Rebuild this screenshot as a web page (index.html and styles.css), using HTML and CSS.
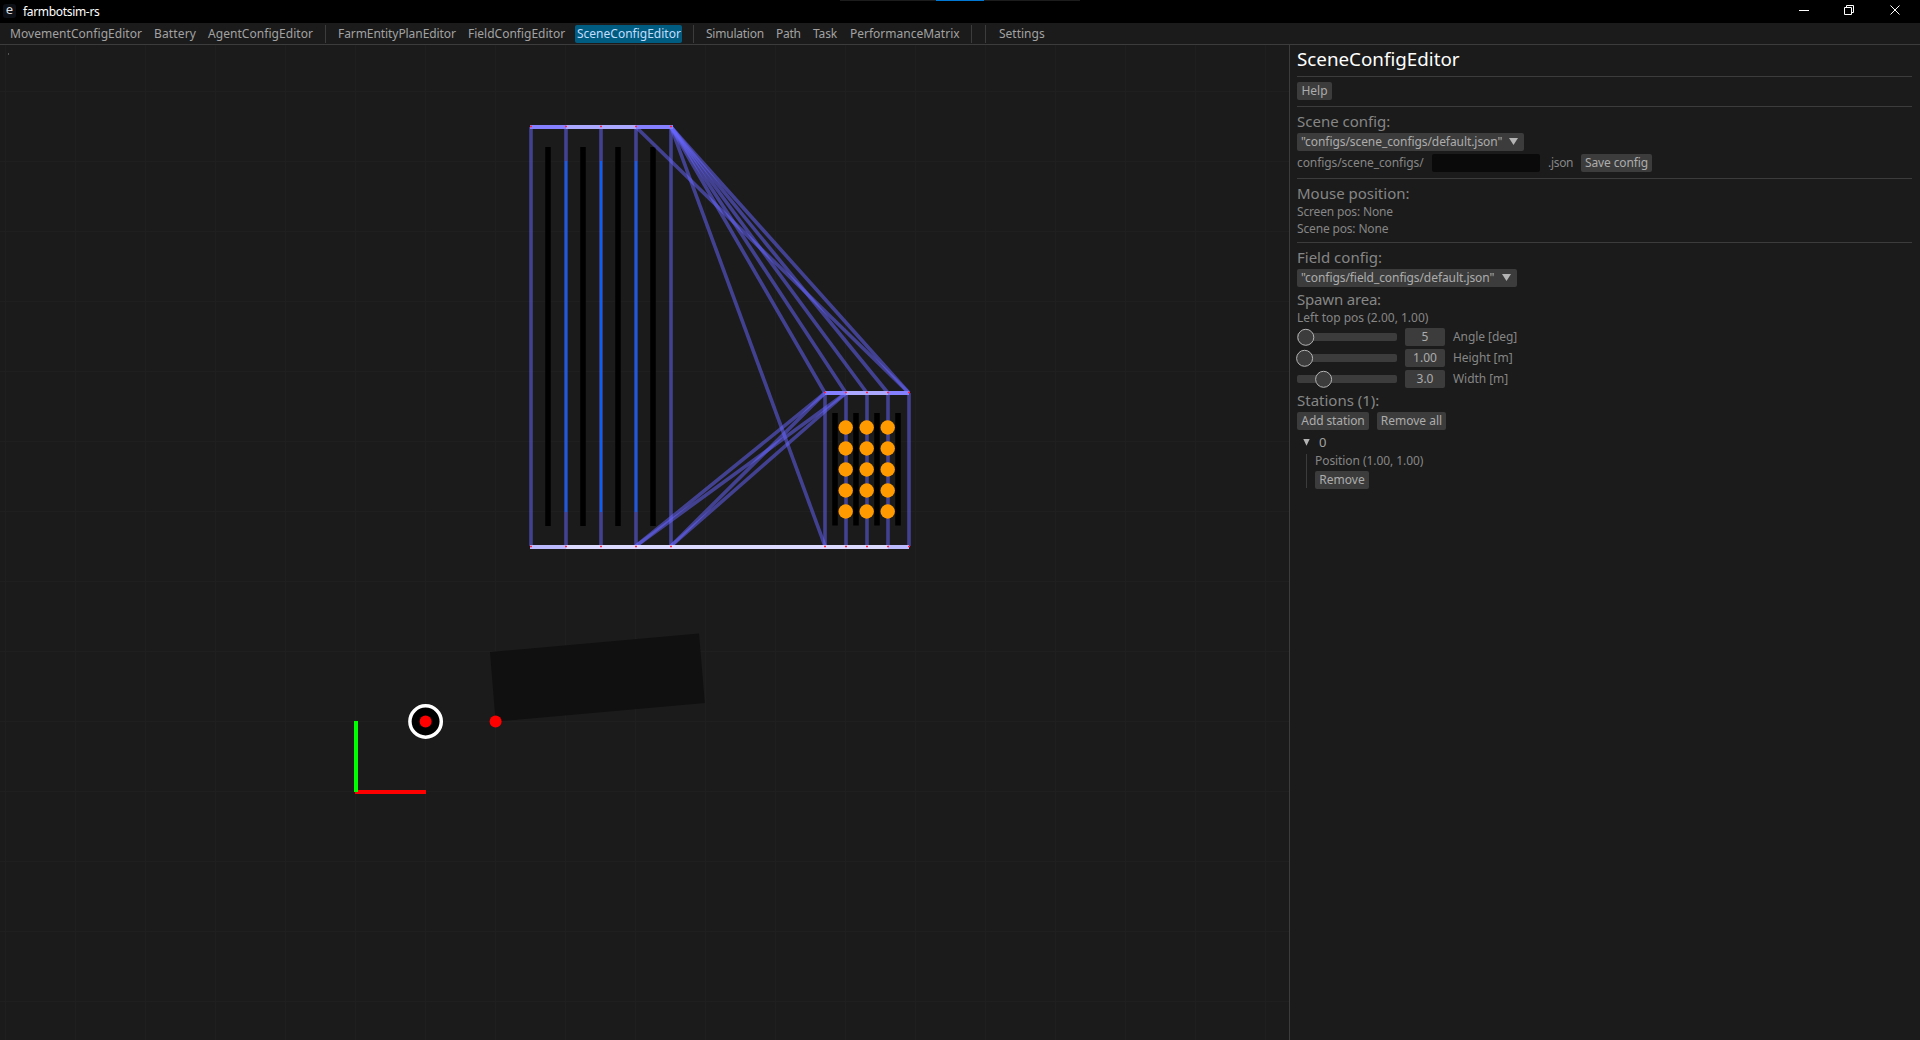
FILE: index.html
```html
<!DOCTYPE html>
<html lang="en">
<head>
<meta charset="utf-8">
<title>farmbotsim-rs</title>
<link rel="stylesheet" href="styles.css">
</head>
<body>
<header class="titlebar">
  <span class="app-icon">e</span><span class="app-name">farmbotsim-rs</span>
  <span class="notch"></span>
  <svg class="win" width="220" height="23" viewBox="0 0 220 23" fill="none" stroke="#fff">
    <path d="M99 10.500h10M144.500 7.500h7v7h-7zM146.500 7.500v-2h7v7h-2"/>
    <path d="M190.500 5.500l9 9M199.500 5.500l-9 9"/>
  </svg>
</header>
<nav class="menu">
  <span class="movement">MovementConfigEditor</span><span class="battery">Battery</span><span class="agent">AgentConfigEditor</span><i></i>
  <span class="plan">FarmEntityPlanEditor</span><span class="field">FieldConfigEditor</span><span class="active">SceneConfigEditor</span><i></i>
  <span class="simulation">Simulation</span><span class="path">Path</span><span class="task">Task</span><span class="matrix">PerformanceMatrix</span><i></i><i></i>
  <span>Settings</span>
</nav>
<main class="body">
  <section class="canvas">
    <svg width="1289" height="995" viewBox="0 45 1289 995">
      <defs>
        <pattern id="grid" x="5" y="21" width="70" height="70" patternUnits="userSpaceOnUse"><path d="M.5 0v70M0 .5h70" stroke="#1f1f1f" fill="none"/></pattern>
      </defs>
      <rect y="45" width="1289" height="995" fill="url(#grid)"/>
      <rect x="8" y="53" width="1" height="2" fill="#555"/>
      <path d="M490 652l209-18.500 5.800 69.500-209.200 18.500z" fill="#101010"/>
      <path d="M548 147v379M583 147v379M618 147v379M653 147v379" stroke="#000" stroke-width="5.500"/>
      <path d="M835 413v112.500M856 413v112.500M877 413v112.500M898 413v112.500" stroke="#000" stroke-width="5.500"/>
      <g class="paths">
        <path d="M531 127V546"/><path d="M566 127V546"/><path d="M601 127V546"/><path d="M636 127V546"/><path d="M671 127V546"/>
        <path d="M825 393V546"/><path d="M846 393V546"/><path d="M867 393V546"/><path d="M888 393V546"/><path d="M909 393V546"/>
        <path d="M671 127L825 393"/><path d="M671 127L846 393"/><path d="M671 127L867 393"/><path d="M671 127L888 393"/><path d="M671 127L909 393"/><path d="M636 127L909 393"/><path d="M671 127L825 546"/>
        <path d="M636 546L825 393"/><path d="M636 546L846 393"/><path d="M671 546L825 393"/><path d="M671 546L846 393"/>
      </g>
      <path d="M566 161V512M601 161V512M636 161V512" stroke="#0a60f4" stroke-width="2"/>
      <path d="M530 127H673" stroke="#8480ff" stroke-width="4"/><path d="M566 127H636" stroke="#aaa8ff" stroke-width="4"/>
      <path d="M825 393H909" stroke="#8480ff" stroke-width="4"/><path d="M846 393H888" stroke="#aaa8ff" stroke-width="4"/>
      <path d="M530 547H909" stroke="#dcdaff" stroke-width="4"/><path d="M530 547H566M888 547H909" stroke="#bcbaff" stroke-width="4"/>
      <path d="M530 126.500h2M565 126.500h2M600 126.500h2M635 126.500h2M670 126.500h2M530 546.500h2M565 546.500h2M600 546.500h2M635 546.500h2M670 546.500h2M824 392.500h2M845 392.500h2M866 392.500h2M887 392.500h2M908 392.500h2M824 546.500h2M845 546.500h2M866 546.500h2M887 546.500h2M908 546.500h2" stroke="#f24" stroke-width="1.500"/>
      <g fill="#ff9a00">
        <circle cx="845.700" cy="427.500" r="7.200"/><circle cx="866.700" cy="427.500" r="7.200"/><circle cx="887.700" cy="427.500" r="7.200"/>
        <circle cx="845.700" cy="448.500" r="7.200"/><circle cx="866.700" cy="448.500" r="7.200"/><circle cx="887.700" cy="448.500" r="7.200"/>
        <circle cx="845.700" cy="469.500" r="7.200"/><circle cx="866.700" cy="469.500" r="7.200"/><circle cx="887.700" cy="469.500" r="7.200"/>
        <circle cx="845.700" cy="490.500" r="7.200"/><circle cx="866.700" cy="490.500" r="7.200"/><circle cx="887.700" cy="490.500" r="7.200"/>
        <circle cx="845.700" cy="511.500" r="7.200"/><circle cx="866.700" cy="511.500" r="7.200"/><circle cx="887.700" cy="511.500" r="7.200"/>
      </g>
      <path d="M355 792h71" stroke="#f00" stroke-width="4"/><path d="M356 721v71" stroke="#0f0" stroke-width="4"/>
      <circle cx="425.600" cy="721.500" r="15.700" fill="#000" stroke="#fff" stroke-width="3.500"/>
      <circle cx="425.600" cy="721.500" r="6" fill="#f00"/><circle cx="495.600" cy="721.500" r="6" fill="#f00"/>
    </svg>
  </section>
  <aside class="panel">
    <h1>SceneConfigEditor</h1>
    <hr>
    <div class="row help"><button class="help-btn">Help</button></div>
    <hr>
    <h2 class="scene-head">Scene config:</h2>
    <div class="combo scene-combo"><span>"configs/scene_configs/default.json"</span><b></b></div>
    <div class="row save"><span class="prefix">configs/scene_configs/</span><input aria-label="File name"><span class="ext">.json</span><button class="save-btn">Save config</button></div>
    <hr>
    <h2 class="mouse-head">Mouse position:</h2>
    <p class="tight">Screen pos: None</p>
    <p class="tight scene-pos">Scene pos: None</p>
    <hr>
    <h2 class="field-head">Field config:</h2>
    <div class="combo field-combo"><span>"configs/field_configs/default.json"</span><b></b></div>
    <h2 class="spawn-head">Spawn area:</h2>
    <p class="left-top">Left top pos (2.00, 1.00)</p>
    <div class="slider"><svg width="108" height="18"><rect x="4" y="5" width="100" height="8" rx="2"/><circle cx="12.800" cy="9.300" r="8"/></svg><span class="value">5</span><span>Angle [deg]</span></div>
    <div class="slider"><svg width="108" height="18"><rect x="4" y="5" width="100" height="8" rx="2"/><circle cx="11.600" cy="9.300" r="8"/></svg><span class="value">1.00</span><span>Height [m]</span></div>
    <div class="slider"><svg width="108" height="18"><rect x="4" y="5" width="100" height="8" rx="2"/><circle cx="30.600" cy="9.300" r="8"/></svg><span class="value">3.0</span><span>Width [m]</span></div>
    <h2 class="stations-head">Stations (1):</h2>
    <div class="row stations"><button class="add">Add station</button><button class="all">Remove all</button></div>
    <div class="node"><svg width="7" height="7"><path d="M.3 0h6.400L3.500 6.800z" fill="#b4b4b4"/></svg><span>0</span></div>
    <div class="children"><p>Position (1.00, 1.00)</p><button class="remove">Remove</button></div>
  </aside>
</main>
</body>
</html>
```
FILE: styles.css
```css
* { box-sizing: border-box; }
body {
  margin: 0; width: 1920px; height: 1040px; overflow: hidden;
  display: flex; flex-direction: column;
  background: #1b1b1b; color: #868686;
  font: 12px/18px "Noto Sans", sans-serif; white-space: nowrap;
}

/* Window title bar */
.titlebar { position: relative; height: 23px; flex: none; background: #000; color: #fff; display: flex; align-items: center; padding-left: 3px; }
.app-icon { width: 13px; height: 14px; margin-top: -1px; border-radius: 3px; background: #0d1117; font-size: 13px; line-height: 11px; text-align: center; color: #ddd; }
.app-name { margin-left: 7px; letter-spacing: -.32px; }
.notch { position: absolute; left: 840px; top: 0; width: 240px; height: 1px; background: linear-gradient(90deg, #1c1c1c 96px, #0078d4 96px 144px, #1c1c1c 144px); }
.win { margin-left: auto; }

/* Tab menu */
.menu { height: 22px; flex: none; border-bottom: 1px solid #3c3c3c; padding: 2px 0 1px 6px; display: flex; color: #a2a2a2; }
.menu span { height: 18px; padding-left: 4px; margin-right: 4px; line-height: 17px; border-radius: 2px; }
.menu i { width: 1px; height: 18px; margin: 0 8px 0 4px; background: #3c3c3c; }
.menu i + i { margin: 0 9px 0 5px; }
.menu .movement { width: 140px; letter-spacing: .05px; }
.menu .battery { width: 50px; letter-spacing: .14px; }
.menu .agent { width: 113px; letter-spacing: .05px; }
.menu .plan { width: 126px; letter-spacing: -.07px; }
.menu .field { width: 105px; }
.menu .active { width: 107px; margin: 0 7px 0 2px; padding-left: 2px; background: #005c80; color: #c0deff; }
.menu .simulation { width: 66px; letter-spacing: -.23px; }
.menu .path { width: 33px; letter-spacing: -.3px; }
.menu .task { width: 33px; letter-spacing: -.15px; }
.menu .matrix { width: 117px; }

/* Scene */
.body { flex: 1; display: flex; min-height: 0; }
.canvas { width: 1289px; flex: none; }
.canvas svg { display: block; }
.paths path { stroke: #6866ff; stroke-opacity: .52; stroke-width: 3.6; fill: none; }

/* Side panel */
.panel { flex: 1; border-left: 1px solid #3c3c3c; padding: 0 8px 0 7px; }
h1, h2, p { margin: 0; font-weight: 400; }
h1 { height: 31px; font-size: 18.8px; line-height: 28px; color: #fff; }
h2 { height: 20px; font-size: 15px; line-height: 18px; }
hr { height: 1px; margin: 0; border: 0; background: #3c3c3c; }
p { height: 17px; line-height: 17px; }
.tight { letter-spacing: -.16px; }
.row { display: flex; }
button, .combo, .value {
  height: 18px; border: 0; border-radius: 2px; padding: 0 0 1px;
  background: #3c3c3c; color: #acacac;
  font: 12px/17px "Noto Sans", sans-serif; text-align: center;
}
.help { padding: 5px 0 6px; }
.help-btn { width: 35px; }
.combo { display: flex; justify-content: space-between; align-items: center; padding: 0 6px 1px 4px; letter-spacing: -.07px; }
.combo b { width: 9px; height: 7px; background: #b4b4b4; clip-path: polygon(0 0, 100% 0, 50% 100%); }
.scene-combo { width: 227px; }
.field-combo { width: 220px; }
.scene-head { margin-top: 5px; height: 21px; }
.save { margin: 3px 0 6px; }
.prefix { width: 135px; line-height: 17px; letter-spacing: -.08px; }
input { width: 108px; height: 18px; border: 0; border-radius: 2px; background: #0a0a0a; }
.ext { width: 33px; margin-left: 8px; line-height: 17px; letter-spacing: -.3px; }
.save-btn { width: 71px; letter-spacing: -.12px; }
.mouse-head { margin-top: 5px; height: 19px; }
.scene-pos { margin-bottom: 5px; }
.field-head { margin-top: 5px; height: 21px; }
.spawn-head { margin-top: 3px; height: 19px; letter-spacing: -.19px; }
.left-top { margin-bottom: 2px; }
.slider { display: flex; height: 18px; margin-bottom: 3px; }
.slider svg { margin-left: -4px; overflow: visible; }
.slider rect { fill: #3c3c3c; }
.slider circle { fill: #3c3c3c; stroke: #b4b4b4; }
.value { width: 40px; margin: 0 8px 0 4px; }
.slider > span:last-child { line-height: 17px; letter-spacing: -.06px; }
.stations-head { height: 21px; }
.stations { gap: 8px; }
.stations button { padding-bottom: 3px; }
.add { width: 72px; letter-spacing: -.1px; }
.all { width: 69px; }
.node { display: flex; align-items: center; gap: 9px; height: 24px; padding-left: 6px; font-size: 13px; color: #a2a2a2; }
.children { height: 34px; margin-left: 9px; border-left: 1px solid #3c3c3c; padding-left: 8px; letter-spacing: -.07px; }
.children p { line-height: 13px; }
.remove { display: block; width: 54px; }
```
